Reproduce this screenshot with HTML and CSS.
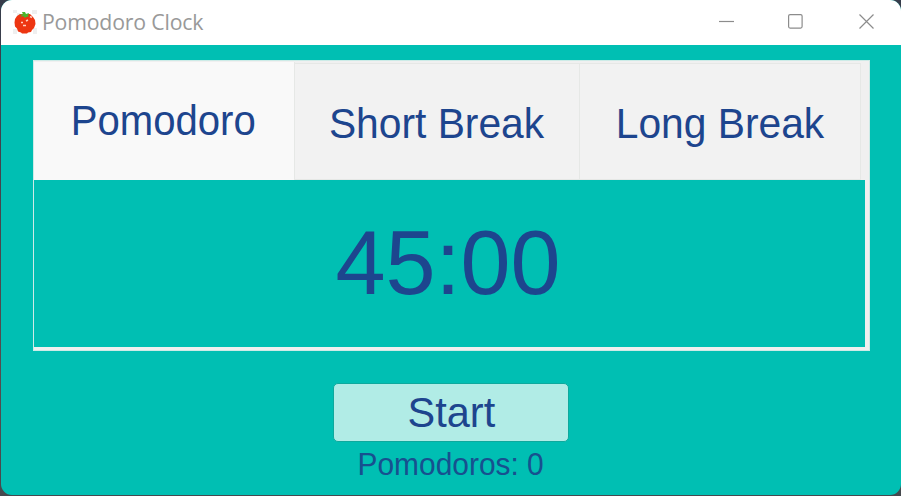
FILE: index.html
```html
<!DOCTYPE html>
<html lang="en">
<head>
<meta charset="utf-8">
<title>Pomodoro Clock</title>
<link rel="stylesheet" href="styles.css">
</head>
<body>
<div class="window">
  <header class="titlebar">
    <svg class="logo" width="24" height="24" viewBox="0 0 24 24">
      <path d="M0 0h4v3H0zM4 3h3v3H4zM19 0h5v4h-5zM0 19h4v5H0zM20 18h4v6h-4z" fill="#efefef"/>
      <path d="M2 9l2-3 3-2h10l3 3 2 3 .5 4-1.500 4-2 2-1 2-3 .5-1 1H9l-1-1-3-1-1-3-2-2-.5-4z" fill="#ed3511"/>
      <path d="M6 4l4 .5L9 2h3l1 2 3-1-1 3 1 .5-3 .5-1 1-2-2-3 1.500L9 5.500z" fill="#49b52c"/>
      <path d="M8 12.500h2M13 11l2-1M10 15.500h3M17 6.500l2 1" stroke="#ffd0c0" stroke-width="1.500" fill="none"/>
    </svg>
    <span class="caption">Pomodoro Clock</span>
    <div class="controls">
      <svg width="16" height="16" viewBox="0 0 16 16"><path d="M0 7.500h15"/></svg>
      <svg width="16" height="16" viewBox="0 0 16 16"><rect x=".6" y=".6" width="13.500" height="13.500" rx="1.500"/></svg>
      <svg width="16" height="16" viewBox="0 0 16 16"><path d="M.5.500l14 14M14.500.5l-14 14"/></svg>
    </div>
  </header>
  <main class="content">
    <section class="notebook">
      <nav class="tabs">
        <div class="tab active"><span>Pomodoro</span></div>
        <div class="tab short"><span>Short Break</span></div>
        <div class="tab long"><span>Long Break</span></div>
      </nav>
      <div class="timer"><span>45:00</span></div>
    </section>
    <button class="start"><span>Start</span></button>
    <div class="count">Pomodoros: 0</div>
  </main>
</div>
</body>
</html>
```
FILE: styles.css
```css
* { box-sizing: border-box; }
body {
  margin: 0;
  height: 496px;
  overflow: hidden;
  background: linear-gradient(#363c4b, #554e50 75%, #45494e);
  font-family: "Liberation Sans", Arial, sans-serif;
  color: #1d458e;
}
.window {
  margin-left: 1px;
  height: 495px;
  border-radius: 11px;
  overflow: hidden;
  background: #00bfb3;
}
.titlebar {
  display: flex;
  align-items: center;
  height: 45px;
  padding: 0 26px 2px 12px;
  background: #fff;
}
.caption {
  margin-left: 5px;
  padding-bottom: 2px;
  font: 22px/30px "Open Sans", "Noto Sans", sans-serif;
  letter-spacing: -0.2px;
  color: #999;
  transform: scaleX(0.968);
  transform-origin: left;
}
.controls {
  display: flex;
  gap: 54px;
  margin-left: auto;
}
.controls svg {
  display: block;
  fill: none;
  stroke: #8c8c8c;
  stroke-width: 1.2;
}
.controls svg:nth-child(2) {
  margin: 0 1px 0 -1px;
}
.content {
  display: flex;
  flex-direction: column;
  align-items: center;
  padding-top: 15px;
}
.notebook {
  width: 837px;
  height: 291px;
  margin-left: 1px;
  border: 1px solid #cdebe7;
  background: #f0f0f0;
}
.tabs {
  display: flex;
  align-items: flex-end;
  height: 119px;
}
.tab {
  display: flex;
  align-items: center;
  justify-content: center;
  height: 117px;
  padding: 2px 1px 0 0;
  border: 1px solid #e6e8e6;
  border-left-width: 0;
  background: #f2f2f2;
  font-size: 43px;
  line-height: 48px;
  white-space: nowrap;
}
.tab span { transform: scaleX(0.948); }
.tab.active {
  width: 261px;
  height: 118px;
  padding: 0 1px 2px 0;
  border-width: 0 1px 0 0;
  background: #f9f9f9;
}
.tab.active span { transform: scaleX(0.933); }
.tab.short { width: 285px; }
.tab.long { width: 281px; padding-right: 0; }
.timer {
  display: flex;
  align-items: center;
  justify-content: center;
  width: 831px;
  height: 167px;
  padding: 0 3px 2px 0;
  background: #00bfb3;
  font-size: 90px;
  line-height: 100px;
}
.start {
  width: 236px;
  height: 59px;
  margin-top: 32px;
  padding: 0;
  border: 1px solid #0ea99d;
  border-radius: 5px;
  background: #b1ece6;
  color: inherit;
  font: 43px/57px "Liberation Sans", Arial, sans-serif;
}
.start span {
  display: inline-block;
  transform: scaleX(0.965);
}
.count {
  margin-top: 5px;
  font-size: 32px;
  line-height: 34px;
  color: #17508f;
  transform: scaleX(0.935);
}
```
